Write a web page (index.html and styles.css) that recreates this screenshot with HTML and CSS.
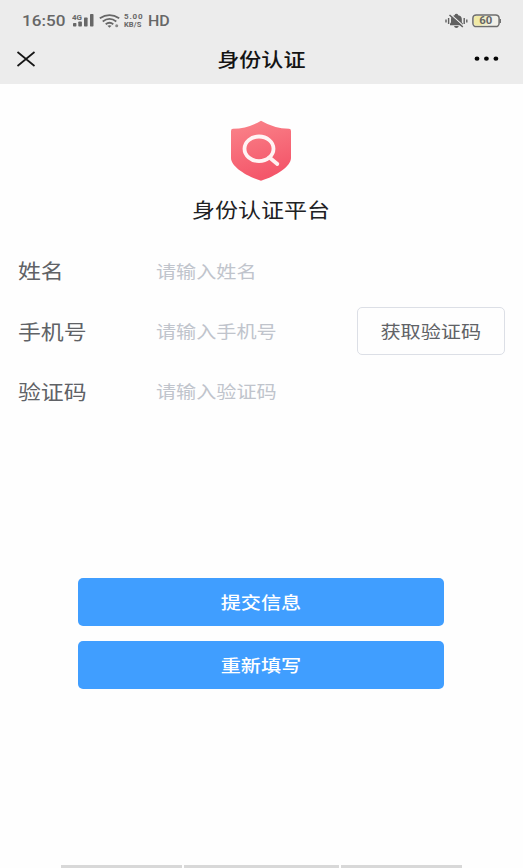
FILE: index.html
```html
<!DOCTYPE html>
<html lang="zh-CN">
<head>
<meta charset="utf-8">
<title>身份认证</title>
<link rel="stylesheet" href="styles.css">
</head>
<body>
<header class="top">
  <div class="status">
    <span class="clock"><span class="stretch">16:50</span></span>
    <svg class="signal" width="23" height="14" viewBox="0 0 23 14"><g fill="#676767"><rect x="1" y="10" width="3.4" height="3.5" rx=".7"/><rect x="6.3" y="8.5" width="3.6" height="5" rx=".7"/><rect x="12" y="4.5" width="3.6" height="9" rx=".7"/><rect x="18" y="1" width="3.5" height="12.5" rx=".7"/></g><text class="net" x="0" y="6.7" textLength="10" lengthAdjust="spacingAndGlyphs">4G</text></svg>
    <svg class="wifi" width="21" height="14" viewBox="0 0 21 14"><g fill="none" stroke="#676767" stroke-width="1.8"><path d="M.8 4.3Q10.5-2.1 20.2 4.3"/><path d="M3.7 7.4Q10.5 2.5 17.3 7.4"/><path d="M6.7 10.2Q10.5 7.2 14.3 10.2"/></g><path fill="#676767" d="M8.4 11.8q2.1-1.3 4.2 0l-2.1 2z"/><circle cx="17.7" cy="11.8" r="1.5" fill="#888"/></svg>
    <span class="speed"><span>5.00</span><span>KB/S</span></span>
    <span class="hd"><span class="stretch">HD</span></span>
    <svg class="mute" width="23" height="16" viewBox="0 0 23 16"><g stroke="#606060" fill="none" stroke-width="1.4"><path d="M1 6.6v2.8M3.6 5v6M19.2 5v6M21.8 6.600v2.800"/></g><path fill="#606060" d="M5 12.300v-1.500l1-1.600V6q.2-3 3.600-3.800Q10 .8 11.400.8T13.200 2.200Q16.800 3 16.800 6v3.200l1.200 1.600v1.500zM9 13h4.800q-.6 2-2.400 2T9 13z"/><path d="M5.800 1.500 18.800 13.200" stroke="#ececec" stroke-width="1.200"/><path d="M4.500 2 17.800 14" stroke="#606060" stroke-width="1.500"/></svg>
    <svg class="battery" width="30" height="14" viewBox="0 0 30 14"><rect x=".9" y=".9" width="26.200" height="11.700" rx="3.400" fill="#f1f0e9" stroke="#6d6d6d" stroke-width="1.500"/><path d="M4 2h6v9.500H4q-2 0-2-2V4q0-2 2-2z" fill="#f0eaa6"/><path d="M10 2h6v9.500h-6z" fill="#f0edc8"/><path d="M28.300 5v4" stroke="#6d6d6d" stroke-width="1.300"/><text class="level" x="7.200" y="10.300" textLength="13" lengthAdjust="spacingAndGlyphs">60</text></svg>
  </div>
  <nav class="nav">
    <svg class="close" width="20" height="18" viewBox="0 0 20 18"><path d="M1.500 2 18.500 16M18.500 2 1.500 16" stroke="#161616" stroke-width="1.700" fill="none"/></svg>
    <h1 class="nav-title wide">身份认证</h1>
    <svg class="more" width="26" height="6" viewBox="0 0 26 6"><g fill="#050505"><ellipse cx="4" cy="2.700" rx="2.400" ry="2.100"/><ellipse cx="13.400" cy="2.700" rx="2.400" ry="2.100"/><ellipse cx="22.900" cy="2.700" rx="2.400" ry="2.100"/></g></svg>
  </nav>
</header>
<main class="page">
  <svg class="shield" width="62" height="62" viewBox="0 0 62 62">
    <defs><linearGradient id="red" x1="0" y1="0" x2=".3" y2="1"><stop offset="0" stop-color="#fa858b"/><stop offset="1" stop-color="#f4566a"/></linearGradient></defs>
    <path fill="url(#red)" d="M31 .8Q44 8.500 59 8.800 61 8.900 61 11V38C61 46.500 46 56 31 60.800 16 56 1 46.500 1 38V11Q1 8.900 3 8.800 18 8.500 31 .8z"/>
    <ellipse cx="29" cy="28.800" rx="14.500" ry="12.300" fill="none" stroke="#fff4f4" stroke-width="3.800"/>
    <path d="M39.500 37.500 47.300 44" stroke="#fff0f0" stroke-width="3.800" stroke-linecap="round"/>
  </svg>
  <h2 class="platform wide">身份认证平台</h2>
  <form class="form">
    <div class="row"><div class="label"><span class="wide">姓名</span></div><div class="field"><span class="wide">请输入姓名</span></div></div>
    <div class="row"><div class="label"><span class="wide">手机号</span></div><div class="field"><span class="wide">请输入手机号</span></div><button type="button" class="code"><span class="wide">获取验证码</span></button></div>
    <div class="row"><div class="label"><span class="wide">验证码</span></div><div class="field"><span class="wide">请输入验证码</span></div></div>
  </form>
  <div class="actions">
    <button type="button" class="primary"><span class="wide">提交信息</span></button>
    <button type="button" class="primary"><span class="wide">重新填写</span></button>
  </div>
</main>
<footer class="tabs"><i></i><i></i><i></i></footer>
</body>
</html>
```
FILE: styles.css
```css
* { box-sizing: border-box; }
body {
  margin: 0;
  height: 868px;
  overflow: hidden;
  display: flex;
  flex-direction: column;
  background: #fefefe;
  font-family: "Noto Sans CJK SC", sans-serif;
}
h1, h2 { margin: 0; }
svg { display: block; flex: none; }
.wide { display: inline-block; white-space: nowrap; transform: scaleX(1.15); }
.stretch { display: inline-block; transform: scaleX(1.14); transform-origin: left; }
.top { height: 84px; background: #ececec; }
.status {
  height: 40px;
  padding: 2px 21px 0 22px;
  display: flex;
  align-items: center;
  color: #676767;
  font-family: Roboto, sans-serif;
}
.clock { width: 50px; font-size: 15px; font-weight: 500; }
.signal { margin-top: -3px; }
.net, .level { font: 700 7.5px Roboto, sans-serif; fill: #676767; }
.level { font-size: 10px; }
.wifi { margin-left: 4px; }
.speed {
  width: 20px;
  margin: -1px 0 0 4px;
  display: flex;
  flex-direction: column;
  font-size: 8px;
  font-weight: 700;
}
.speed span { height: 8px; line-height: 8px; white-space: nowrap; }
.speed span:first-child { letter-spacing: .8px; }
.speed span:last-child { font-size: 7.5px; letter-spacing: .1px; }
.hd { margin-left: 4px; font-size: 14px; font-weight: 500; }
.mute { margin-left: auto; }
.battery { margin-left: 4px; }
.nav {
  height: 38px;
  padding: 0 24px 0 16px;
  display: grid;
  grid-template-columns: 40px 1fr 32px;
  align-items: center;
}
.nav-title { justify-self: center; margin-top: -1px; font-size: 19.2px; line-height: 28px; font-weight: 500; color: #141414; }
.more { justify-self: end; }
.page { flex: 1; display: flex; flex-direction: column; align-items: center; }
.shield { margin: 36px 1px 0 0; }
.platform { margin: 13px 1px 0 0; font-size: 20px; line-height: 30px; font-weight: 400; color: #202123; }
.form { width: 100%; margin-top: 16px; padding: 0 18px; }
.row { height: 60.3px; display: flex; align-items: center; }
.label { width: 138px; font-size: 19.9px; color: #606266; }
.field { flex: 1; font-size: 17.5px; color: #c0c4cc; }
.label .wide, .field .wide { transform-origin: left; }
.label { padding-bottom: .5px; }
.field { padding-bottom: 2px; }
button { padding: 0 0 2px; font-family: inherit; font-size: 17.5px; font-weight: 400; border-radius: 5px; }
.code { width: 148px; height: 48px; border: 1px solid #dcdfe6; background: #fefefe; color: #606266; }
.actions { width: 366px; margin: 156.6px 1px 0 0; display: grid; gap: 15px; }
.primary { height: 48px; border: 0; background: #409eff; color: #fff; font-weight: 500; }
.tabs { height: 3px; margin: 0 61px; display: grid; grid-template-columns: 121px 155px 121px; justify-content: space-between; }
.tabs i { background: #d8d8d8; }
```
